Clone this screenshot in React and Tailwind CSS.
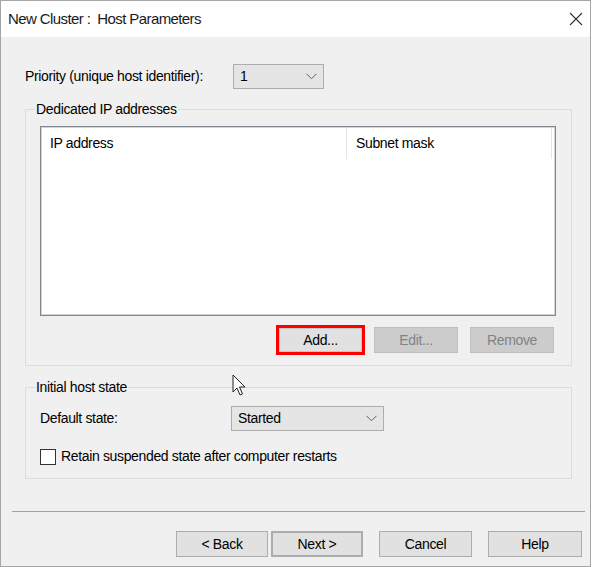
import React from "react";

const font = { fontFamily: '"Liberation Sans", Arial, sans-serif' };

const Chevron = () => (
  <svg width="11" height="7" viewBox="0 0 11 7" className="text-[#606060]">
    <path d="M0.5 0.8 L5.5 5.8 L10.5 0.8" fill="none" stroke="currentColor" strokeWidth="1" />
  </svg>
);

const Combo = ({ value, className }) => (
  <div
    className={
      "h-[25px] flex items-center justify-between pl-[6px] pr-[6px] bg-[#e5e5e5] border border-[#adadad] " +
      className
    }
  >
    <span>{value}</span>
    <Chevron />
  </div>
);

const Button = ({ children, className, disabled }) => (
  <div
    className={
      "flex items-center justify-center " +
      (disabled
        ? "bg-[#cccccc] border border-[#bfbfbf] text-[#838383] "
        : "bg-[#e1e1e1] border border-[#adadad] text-black ") +
      className
    }
  >
    {children}
  </div>
);

const App = () => {
  return (
    <div
      className="w-[592px] h-[567px] bg-white text-[14px] tracking-[-0.35px] text-black relative"
      style={font}
    >
      <div className="w-[591px] h-[567px] border border-[#a6a6a6] flex flex-col">
        {/* title bar */}
        <div className="h-[36px] bg-white flex items-center justify-between pl-[7px] pr-[7px]">
          <span className="text-[15px] tracking-[-0.6px] text-[#1a1a1a]">
            New Cluster :&nbsp; Host Parameters
          </span>
          <svg width="14" height="14" viewBox="0 0 14 14">
            <path d="M1 1 L13 13 M13 1 L1 13" stroke="#333" strokeWidth="1.1" />
          </svg>
        </div>

        <div className="flex-1 bg-[#f0f0f0] flex flex-col px-[24px] pt-[27px]">
          {/* priority */}
          <div className="flex items-center">
            <span className="w-[208px]">Priority (unique host identifier):</span>
            <Combo value="1" className="w-[91px]" />
          </div>

          {/* dedicated ip */}
          <fieldset className="mt-[12px] w-[547px] border border-[#dcdcdc] pl-[14px] pr-[14px] pb-[10px]">
            <legend className="-ml-[5px] px-[1px] leading-[16px]">Dedicated IP addresses</legend>
            <div className="mt-[9px] w-[516px] h-[190px] bg-white border border-[#828790] shadow-[inset_0_0_0_1px_#d4d4d4] flex flex-col">
              <div className="h-[32px] flex items-stretch pt-[1px]">
                <div className="w-[306px] pl-[9px] flex items-center border-r border-[#e5e5e5]">
                  IP address
                </div>
                <div className="w-[205px] pl-[9px] flex items-center border-r border-[#e5e5e5]">
                  Subnet mask
                </div>
              </div>
            </div>
            <div className="mt-[9px] flex items-center justify-end pr-[3px]">
              <div className="w-[89px] h-[30px] border-[3px] border-[#ff0000] flex">
                <Button className="flex-1 border-[#c4c4c4]">Add...</Button>
              </div>
              <Button disabled className="ml-[9px] w-[84px] h-[26px]">
                Edit...
              </Button>
              <Button disabled className="ml-[12px] w-[84px] h-[26px]">
                Remove
              </Button>
            </div>
          </fieldset>

          {/* initial host state */}
          <fieldset className="mt-[13px] w-[547px] border border-[#dcdcdc] pl-[14px] pb-[11px]">
            <legend className="-ml-[5px] px-[1px] leading-[16px]">Initial host state</legend>
            <div className="mt-[11px] flex items-center">
              <span className="w-[191px]">Default state:</span>
              <Combo value="Started" className="w-[153px]" />
            </div>
            <div className="mt-[15px] flex items-center">
              <div className="w-[16px] h-[16px] bg-white border border-[#333333]" />
              <span className="ml-[5px]">Retain suspended state after computer restarts</span>
            </div>
          </fieldset>

          {/* separator */}
          <div className="mt-[32px] -ml-[13px] w-[573px] h-[1px] bg-[#a0a0a0]" />

          {/* bottom buttons */}
          <div className="mt-[19px] -mr-[16px] flex justify-end">
            <Button className="w-[92px] h-[26px]">&lt; Back</Button>
            <Button className="ml-[3px] w-[92px] h-[26px] border-2 border-[#0078d7]">Next &gt;</Button>
            <Button className="ml-[16px] w-[93px] h-[26px]">Cancel</Button>
            <Button className="ml-[16px] w-[94px] h-[26px]">Help</Button>
          </div>
        </div>
      </div>

      {/* mouse cursor */}
      <svg
        className="absolute left-[232px] top-[374px]"
        width="16"
        height="24"
        viewBox="0 0 16 24"
      >
        <path
          d="M1 1 L1 18 L5 14 L8 21 L10.5 20 L7.5 13 L13 13 Z"
          fill="white"
          stroke="#222"
          strokeWidth="1"
          strokeLinejoin="round"
        />
      </svg>
    </div>
  );
};

export default App;
